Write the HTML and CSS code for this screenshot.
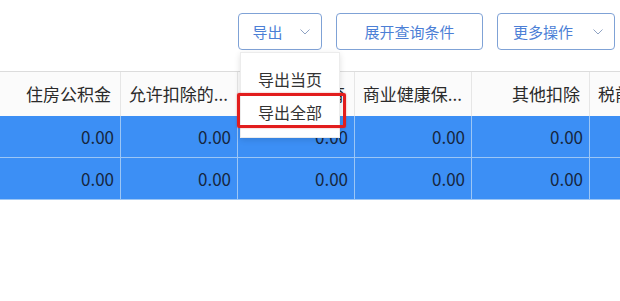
FILE: index.html
```html
<!DOCTYPE html>
<html lang="zh-CN">
<head>
<meta charset="utf-8">
<link rel="stylesheet" href="styles.css">
</head>
<body>
<div class="page">
  <div class="toolbar">
    <div class="btn btn-export">导出<svg class="chev" viewBox="0 0 10 6"><path d="M0.5 0.5 L5 5 L9.5 0.5" fill="none" stroke="#8fa3c4" stroke-width="1"/></svg></div>
    <div class="btn btn-query">展开查询条件</div>
    <div class="btn btn-more">更多操作<svg class="chev" viewBox="0 0 10 6"><path d="M0.5 0.5 L5 5 L9.5 0.5" fill="none" stroke="#8fa3c4" stroke-width="1"/></svg></div>
  </div>
  <div class="table">
    <div class="row head">
      <div class="cell">住房公积金</div>
      <div class="cell">允许扣除的...</div>
      <div class="cell">继续教育</div>
      <div class="cell">商业健康保...</div>
      <div class="cell">其他扣除</div>
      <div class="cell left">税前扣除</div>
    </div>
    <div class="row data">
      <div class="cell">0.00</div>
      <div class="cell">0.00</div>
      <div class="cell">0.00</div>
      <div class="cell">0.00</div>
      <div class="cell">0.00</div>
      <div class="cell"></div>
    </div>
    <div class="row data">
      <div class="cell">0.00</div>
      <div class="cell">0.00</div>
      <div class="cell">0.00</div>
      <div class="cell">0.00</div>
      <div class="cell">0.00</div>
      <div class="cell"></div>
    </div>
  </div>
  <div class="menu">
    <div class="menu-item">导出当页</div>
    <div class="menu-item">导出全部</div>
  </div>
  <div class="highlight"></div>
</div>
</body>
</html>
```
FILE: styles.css
```css
* { box-sizing: border-box; }
html, body { margin: 0; padding: 0; background: #fff; }
body {
  font-family: "Noto Sans CJK SC", "Microsoft YaHei", sans-serif;
  width: 620px;
  height: 301px;
  overflow: hidden;
}
.page { position: relative; width: 620px; height: 301px; }
.toolbar {
  height: 71px;
  display: flex;
  justify-content: flex-end;
  align-items: flex-start;
  gap: 14px;
  padding: 13px 5px 0 0;
}
.btn {
  height: 37px;
  border: 1px solid #7fa2d6;
  border-radius: 4px;
  color: #4c7fd6;
  font-size: 15px;
  display: flex;
  align-items: center;
  justify-content: center;
  background: #fff;
}
.btn-export { width: 84px; padding-left: 2px; gap: 17px; }
.btn-query { width: 147px; }
.btn-more { width: 118px; padding-left: 4px; gap: 20px; }
.chev { width: 10px; height: 6px; }
.table {
  border-top: 1px solid #dcdcdc;
}
.row {
  display: grid;
  grid-template-columns: 121px 117px 117px 117px 118px 40px;
}
.cell {
  text-align: right;
  padding: 0 8px 0 0;
  white-space: nowrap;
  overflow: hidden;
  border-right: 1px solid #e6e6e6;
}
.cell.left { text-align: left; padding: 0 0 0 8px; }
.head { height: 44px; background: #fbfbfb; }
.head .cell {
  line-height: 44px;
  font-size: 17px;
  color: #2a2a2a;
  padding-right: 9px;
}
.data {
  height: 42px;
  background: #3c8ff5;
  border-bottom: 1px solid #9cc6f5;
}
.data .cell {
  line-height: 41px;
  font-size: 17px;
  color: #16263e;
  border-right-color: #9cc6f5;
  padding-right: 6px;
}
.menu {
  position: absolute;
  left: 240px;
  top: 52px;
  width: 100px;
  padding: 10px 0 8px;
  background: #fff;
  border: 1px solid #ececec;
  box-shadow: 0 2px 6px rgba(0,0,0,0.12);
}
.menu-item {
  height: 33px;
  line-height: 33px;
  text-align: center;
  font-size: 16px;
  color: #333;
}
.highlight {
  position: absolute;
  left: 237px;
  top: 93px;
  width: 109px;
  height: 35px;
  border: 3px solid #e21d1d;
  border-radius: 2px;
  box-shadow: 0 0 2px rgba(200,0,0,0.4);
}
```
